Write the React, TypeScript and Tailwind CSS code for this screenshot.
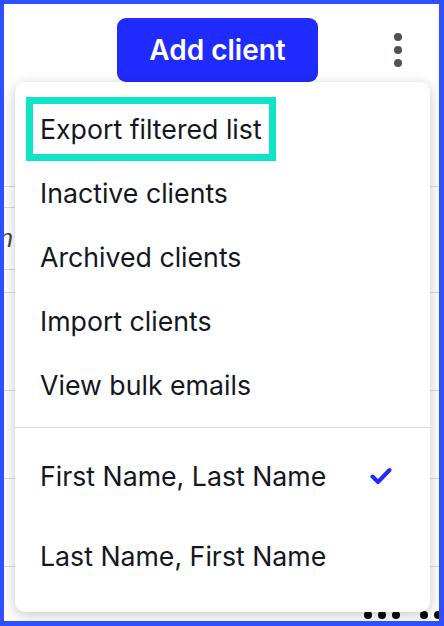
import { useState } from 'react';

const MENU_ITEMS = ['Export filtered list', 'Inactive clients', 'Archived clients', 'Import clients', 'View bulk emails'];
const SORT_OPTIONS = ['First Name, Last Name', 'Last Name, First Name'];

function KebabIcon() {
    return (
        <div className="flex flex-col items-center gap-[5px]">
            <span className="w-[8px] h-[8px] rounded-full bg-[#4f525a]" />
            <span className="w-[8px] h-[8px] rounded-full bg-[#4f525a]" />
            <span className="w-[8px] h-[8px] rounded-full bg-[#4f525a]" />
        </div>
    );
}

function Check() {
    return (
        <svg width="22" height="18" viewBox="0 0 22 18" fill="none">
            <path d="M2.5 9.5 L8 15 L19.5 3" stroke="#1f2bff" strokeWidth="4" strokeLinecap="round" strokeLinejoin="round" />
        </svg>
    );
}

export default function App() {
    const [sort, setSort] = useState(0);

    return (
        <div className="relative w-[444px] h-[626px] overflow-hidden bg-white border-l-4 border-t-4 border-r-[5px] border-b-[5px] border-[#3050ff] font-['Inter',sans-serif]">
            {/* Header */}
            <div className="h-[78px] flex items-start">
                <button className="ml-[113px] mt-[14px] w-[201px] h-[64px] rounded-[9px] bg-[#1f2bff] text-white text-[28px] font-semibold">
                    Add client
                </button>
                <div className="ml-[76px] mt-[29px]">
                    <KebabIcon />
                </div>
            </div>

            {/* Table behind the menu */}
            <div className="flex flex-col">
                <div className="h-[105px] border-b border-[#dcdcdc]" />
                <div className="h-[106px] border-b border-[#dcdcdc] flex">
                    <div className="w-[40px] flex flex-col">
                        <div className="h-[21px] border-b border-[#dcdcdc]" />
                        <div className="h-[62px] border-b border-[#dcdcdc] flex items-center">
                            <span className="-ml-[62px] text-[25px] italic text-[#444] font-['Liberation_Sans',sans-serif]">Admin</span>
                        </div>
                    </div>
                </div>
                <div className="h-[98px] border-b border-[#dcdcdc]" />
                <div className="h-[88px] border-b border-[#dcdcdc]" />
                <div className="h-[88px] border-b border-[#dcdcdc]" />
                <div className="h-[54px] flex items-end">
                    <div className="ml-[333px] w-px h-[10px] bg-[#dcdcdc]" />
                    <div className="ml-[27px] mb-[2px] flex items-center gap-[6px]">
                        <span className="w-[8px] h-[8px] rounded-full bg-[#0a0a0a]" />
                        <span className="w-[8px] h-[8px] rounded-full bg-[#0a0a0a]" />
                        <span className="w-[8px] h-[8px] rounded-full bg-[#0a0a0a]" />
                        <span className="ml-[14px] w-[8px] h-[8px] rounded-full bg-[#0a0a0a]" />
                        <span className="w-[8px] h-[8px] rounded-full bg-[#0a0a0a]" />
                    </div>
                </div>
            </div>

            {/* Dropdown menu */}
            <div className="absolute left-[11px] top-[78px] w-[415px] h-[530px] bg-white rounded-[10px] shadow-[0_3px_14px_rgba(0,0,0,0.22)] flex flex-col pt-[15px]">
                {MENU_ITEMS.map((item, i) => (
                    <div key={item} className="h-[64px] flex items-center pl-[11px]">
                        <div className={i === 0 ? 'h-[64px] flex items-center px-[7px] border-[7px] border-[#10e4c8]' : 'h-[64px] flex items-center px-[14px]'}>
                            <span className="text-[26.7px] text-[#14171f] leading-none">{item}</span>
                        </div>
                    </div>
                ))}
                <div className="mt-[10px] h-px bg-[#dcdcdc]" />
                <div className="pt-[8px]">
                    {SORT_OPTIONS.map((opt, i) => (
                        <div key={opt} onClick={() => setSort(i)} className="h-[80px] flex items-center justify-between pl-[25px] pr-[38px] cursor-pointer">
                            <span className="text-[26.7px] text-[#14171f] leading-none">{opt}</span>
                            {sort === i && <Check />}
                        </div>
                    ))}
                </div>
            </div>
        </div>
    );
}
